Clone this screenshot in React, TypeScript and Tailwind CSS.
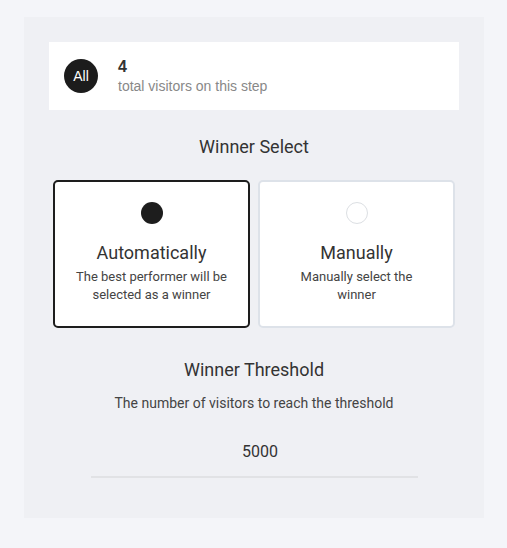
import React, { useState } from 'react';

// Winner select panel: visitor count header, two option cards, threshold input.

type Mode = 'auto' | 'manual';

function OptionCard({
  active,
  title,
  desc,
  onClick,
}: {
  active: boolean;
  title: string;
  desc: string;
  onClick: () => void;
}) {
  return (
    <button
      type="button"
      onClick={onClick}
      className={`flex flex-col items-center rounded-[5px] border-2 bg-white px-4 pt-[20px] pb-[22px] ${
        active ? 'border-[#1d1d1d]' : 'border-[#dde2e9]'
      }`}
    >
      <span
        className={`block h-[22px] w-[22px] rounded-full ${
          active ? 'bg-[#1d1d1d]' : 'border border-[#dcdfe3] bg-white'
        }`}
      />
      <span className="mt-[16px] text-[18px] leading-[26px] text-[#333]">{title}</span>
      <span className="mt-[2px] max-w-[152px] text-[13px] leading-[18px] text-[#444]">{desc}</span>
    </button>
  );
}

export default function App() {
  const [mode, setMode] = useState<Mode>('auto');
  const [threshold, setThreshold] = useState('5000');

  return (
    <div className="min-h-[548px] bg-[#f4f5f9] pt-[17px] pl-[24px] font-['Roboto',sans-serif]">
      <div className="w-[460px] bg-[#eff0f4] px-[25px] pt-[25px] pb-[40px]">
        {/* Шапка с количеством посетителей */}
        <div className="flex h-[68px] items-center bg-white pl-[15px] font-['Liberation_Sans',Arial,sans-serif]">
          <div className="flex h-[34px] w-[34px] items-center justify-center rounded-full bg-[#1c1c1c] text-[14px] text-white">
            All
          </div>
          <div className="ml-[20px] flex flex-col">
            <span className="text-[16px] font-bold leading-[18px] text-[#333]">4</span>
            <span className="mt-[2px] text-[14px] leading-[17px] text-[#888]">
              total visitors on this step
            </span>
          </div>
        </div>

        <h2 className="mt-[24px] text-center text-[18px] leading-[26px] text-[#333]">Winner Select</h2>

        <div className="mt-[20px] grid grid-cols-2 gap-[8px] px-[4px]">
          <OptionCard
            active={mode === 'auto'}
            title="Automatically"
            desc="The best performer will be selected as a winner"
            onClick={() => setMode('auto')}
          />
          <OptionCard
            active={mode === 'manual'}
            title="Manually"
            desc="Manually select the winner"
            onClick={() => setMode('manual')}
          />
        </div>

        <h2 className="mt-[29px] text-center text-[18px] leading-[26px] text-[#333]">Winner Threshold</h2>
        <p className="mt-[10px] text-center text-[14px] leading-[20px] text-[#444]">
          The number of visitors to reach the threshold
        </p>

        <div className="mx-auto mt-[27px] w-[327px]">
          <input
            value={threshold}
            onChange={(e) => setThreshold(e.target.value)}
            className="w-full border-b-2 border-[#e1e2e5] bg-transparent pb-[12px] pl-[12px] text-center text-[16px] leading-[24px] text-[#333] outline-none"
          />
        </div>
      </div>
    </div>
  );
}
